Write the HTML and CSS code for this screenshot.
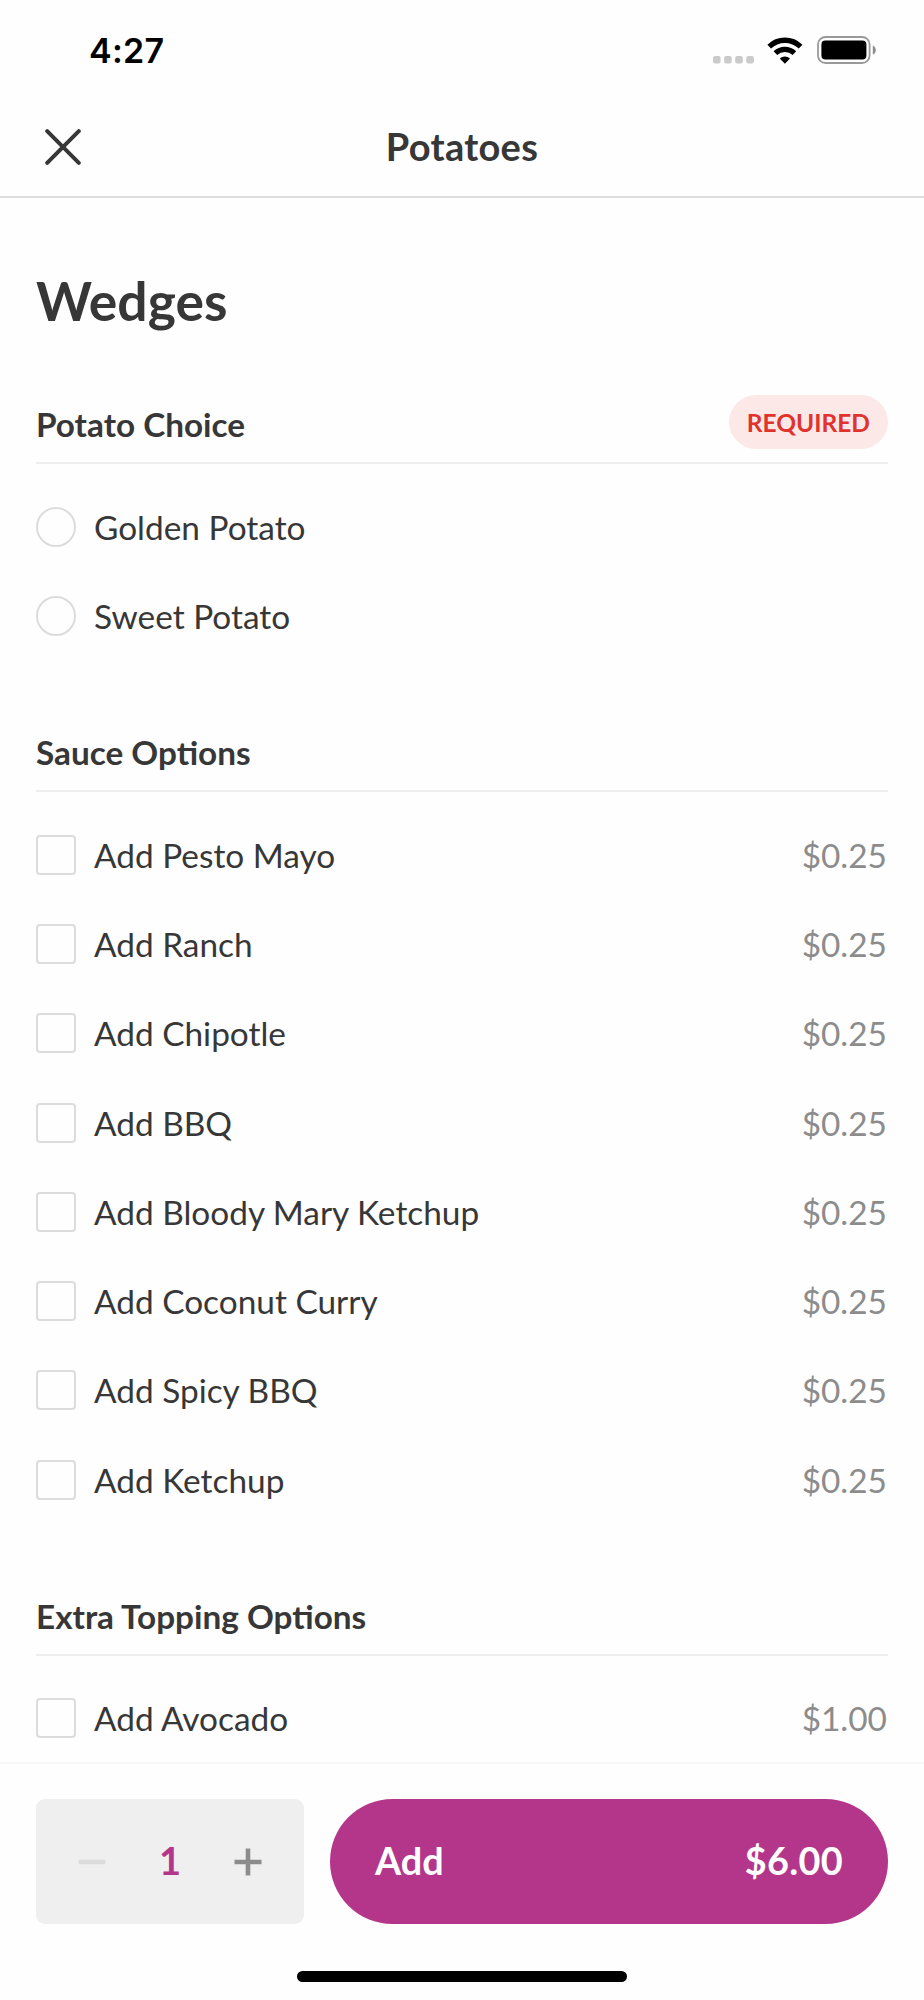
FILE: index.html
```html
<!DOCTYPE html>
<html lang="en">
<head>
<meta charset="utf-8">
<title>Potatoes</title>
<link rel="stylesheet" href="styles.css">
</head>
<body>
<div class="screen">
  <header class="top">
    <div class="status">
      <span class="time">4:27</span>
      <div class="status-icons">
        <svg class="dots" width="42" height="8" viewBox="0 0 42 8" fill="#cacaca"><rect x="0" y="0" width="7.6" height="7.4" rx="2"/><rect x="11.1" y="0" width="7.6" height="7.4" rx="2"/><rect x="22.2" y="0" width="7.6" height="7.4" rx="2"/><rect x="33.3" y="0" width="7.6" height="7.4" rx="2"/></svg>
        <svg class="wifi" width="36" height="27" viewBox="0 0 36 27"><g fill="none" stroke="#000" stroke-width="5.3"><path d="M2.2 9.6a22.6 22.6 0 0 1 31.4 0"/><path d="M8.4 16.1a13.8 13.8 0 0 1 19 0"/></g><path d="M17.9 26.7l-5.1-5.1a7.4 7.4 0 0 1 10.2 0z"/></svg>
        <svg class="battery" width="60" height="28" viewBox="0 0 60 28"><rect x="1" y="1" width="51.6" height="26" rx="7.6" fill="none" stroke="#999" stroke-width="1.8"/><rect x="4.4" y="4.5" width="45" height="19" rx="4"/><path d="M55.8 9.4c4 1.6 4 7.6 0 9.2z" fill="#8c8c8c"/></svg>
      </div>
    </div>
    <nav class="navbar">
      <button class="close" aria-label="Close"><svg width="36" height="36" viewBox="0 0 36 36" fill="none" stroke="#373737" stroke-width="4" stroke-linecap="round"><path d="M2.2 2.2l31.6 31.6M33.8 2.2L2.2 33.8"/></svg></button>
      <div class="nav-title">Potatoes</div>
    </nav>
  </header>

  <main class="content">
    <h1 class="title">Wedges</h1>

    <section class="group">
      <div class="group-head"><h2>Potato Choice</h2><span class="badge">REQUIRED</span></div>
      <ul class="options">
        <li class="option"><span class="mark round"></span><span class="name">Golden Potato</span></li>
        <li class="option"><span class="mark round"></span><span class="name">Sweet Potato</span></li>
      </ul>
    </section>

    <section class="group">
      <div class="group-head"><h2>Sauce Options</h2></div>
      <ul class="options">
        <li class="option"><span class="mark"></span><span class="name">Add Pesto Mayo</span><span class="price">$0.25</span></li>
        <li class="option"><span class="mark"></span><span class="name">Add Ranch</span><span class="price">$0.25</span></li>
        <li class="option"><span class="mark"></span><span class="name">Add Chipotle</span><span class="price">$0.25</span></li>
        <li class="option"><span class="mark"></span><span class="name">Add BBQ</span><span class="price">$0.25</span></li>
        <li class="option"><span class="mark"></span><span class="name">Add Bloody Mary Ketchup</span><span class="price">$0.25</span></li>
        <li class="option"><span class="mark"></span><span class="name">Add Coconut Curry</span><span class="price">$0.25</span></li>
        <li class="option"><span class="mark"></span><span class="name">Add Spicy BBQ</span><span class="price">$0.25</span></li>
        <li class="option"><span class="mark"></span><span class="name">Add Ketchup</span><span class="price">$0.25</span></li>
      </ul>
    </section>

    <section class="group">
      <div class="group-head"><h2>Extra Topping Options</h2></div>
      <ul class="options">
        <li class="option"><span class="mark"></span><span class="name">Add Avocado</span><span class="price">$1.00</span></li>
      </ul>
    </section>
  </main>

  <footer class="bottom">
    <div class="actions">
      <div class="stepper">
        <svg width="28" height="28" viewBox="0 0 28 28" stroke="#dcdcdc" stroke-width="4.6"><path d="M.5 14h27"/></svg>
        <span class="count">1</span>
        <svg width="28" height="28" viewBox="0 0 28 28" stroke="#8c8c8c" stroke-width="4.6"><path d="M.5 14h27M14 .5v27"/></svg>
      </div>
      <button class="add"><span>Add</span><span class="total">$6.00</span></button>
    </div>
    <div class="home-bar"></div>
  </footer>
</div>
</body>
</html>
```
FILE: styles.css
```css
* { box-sizing: border-box; }

body {
  margin: 0;
  background: #fefefe;
  color: #373737;
  font-family: Lato, "Open Sans", sans-serif;
}

h1, h2, ul { margin: 0; padding: 0; }

button {
  border: 0;
  padding: 0;
  background: none;
  font: inherit;
  color: inherit;
}

svg { display: block; }

.screen {
  display: flex;
  flex-direction: column;
  width: 924px;
  height: 2000px;
  overflow: hidden;
}

.top {
  flex: none;
  height: 198px;
  border-bottom: 2px solid #dcdcdc;
}

.status {
  display: flex;
  justify-content: space-between;
  height: 96px;
  padding: 31px 47px 0 89px;
}

.time {
  font: 600 34px/40px Inter, sans-serif;
  letter-spacing: 0.3px;
  color: #000;
}

.status-icons {
  display: flex;
  align-items: flex-end;
  height: 33px;
}

.dots { margin: 0 12px 0 0; }
.battery { margin-left: 14px; }

.navbar {
  display: grid;
  grid-template-columns: 36px 1fr 36px;
  align-items: center;
  height: 101px;
  padding: 0 44.5px;
}

.nav-title {
  padding-bottom: 1px;
  font-size: 38px;
  font-weight: 700;
  letter-spacing: 0.3px;
  text-align: center;
}

.content {
  flex: 1;
  min-height: 0;
  overflow: hidden;
  padding: 70px 36px 0;
}

.title {
  margin-bottom: 54px;
  font-size: 53.4px;
  font-weight: 700;
  line-height: 64px;
}

.group { margin-bottom: 53.6px; }

.group-head {
  display: flex;
  align-items: center;
  justify-content: space-between;
  height: 78px;
  border-bottom: 2px solid #eee;
}

.group-head h2 {
  font-size: 33.3px;
  font-weight: 700;
}

.badge {
  height: 54px;
  margin-bottom: 4px;
  padding: 1px 18px 0;
  border-radius: 27px;
  background: #fde8e8;
  color: #e0332e;
  font-size: 24.5px;
  font-weight: 700;
  line-height: 54px;
}

.options {
  padding-top: 18px;
  list-style: none;
}

.option {
  display: flex;
  align-items: center;
  height: 89.28px;
  font-size: 33.4px;
}

.mark {
  width: 40px;
  height: 40px;
  margin-right: 18px;
  border: 2px solid #dcdcdc;
  border-radius: 4px;
}

.round { border-radius: 50%; }

.name { flex: 1; }

.price {
  padding-right: 1px;
  color: #8c8c8c;
}

.bottom {
  flex: none;
  height: 238px;
  border-top: 2px solid #f7f7f7;
  padding: 35px 36px 0;
}

.actions {
  display: flex;
  gap: 26px;
  height: 125px;
}

.stepper {
  display: flex;
  align-items: center;
  justify-content: space-between;
  width: 268px;
  padding: 0 42px;
  border-radius: 9px;
  background: #efefef;
}

.count {
  padding-bottom: 3px;
  color: #b4368b;
  font-size: 38px;
  font-weight: 700;
}

.add {
  display: flex;
  flex: 1;
  align-items: center;
  justify-content: space-between;
  padding: 0 45px 2px;
  border-radius: 63px;
  background: #b4368b;
  color: #fff;
  font-size: 37.8px;
  font-weight: 700;
}

.total { letter-spacing: 0.3px; }

.home-bar {
  width: 330px;
  height: 11px;
  margin: 47px auto 0;
  border-radius: 6px;
  background: #000;
}
```
